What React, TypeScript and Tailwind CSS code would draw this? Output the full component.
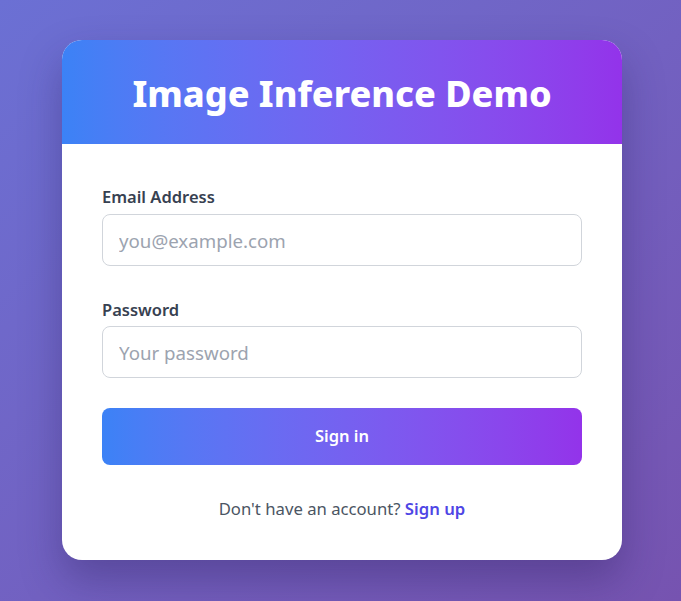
import React, { useState } from 'react';

export default function App() {
  const [email, setEmail] = useState('');
  const [password, setPassword] = useState('');

  return (
    <div
      className="min-h-screen w-full flex items-start justify-center pt-10 pl-[3px] bg-gradient-to-br from-[#6b70d4] to-[#7653b0]"
      style={{ fontFamily: '"Noto Sans", "Open Sans", sans-serif' }}
    >
      <div className="w-[560px] bg-white rounded-[20px] overflow-hidden shadow-[0_20px_40px_rgba(40,30,90,0.35)]">
        {/* Header */}
        <div className="h-[104px] flex items-center justify-center pt-[3px] bg-gradient-to-r from-[#3b82f6] to-[#9333ea]">
          <h1 className="text-white text-[36px] font-extrabold leading-none">Image Inference Demo</h1>
        </div>

        {/* Form */}
        <form className="px-10 pt-10 pb-[39px]" onSubmit={(e) => e.preventDefault()}>
          <label className="block text-[16.5px] font-semibold text-[#374151] leading-6 mt-px mb-[5px]">Email Address</label>
          <input
            type="email"
            value={email}
            onChange={(e) => setEmail(e.target.value)}
            placeholder="you@example.com"
            className="w-full h-[52px] px-4 text-[18.7px] border border-[#d1d5db] rounded-lg outline-none placeholder:text-[#9ca3af] text-[#374151]"
          />

          <label className="block text-[16.5px] font-semibold text-[#374151] leading-6 mt-[32px] mb-[4px]">Password</label>
          <input
            type="password"
            value={password}
            onChange={(e) => setPassword(e.target.value)}
            placeholder="Your password"
            className="w-full h-[52px] px-4 text-[18.7px] border border-[#d1d5db] rounded-lg outline-none placeholder:text-[#9ca3af] text-[#374151]"
          />

          <button
            type="submit"
            className="w-full h-[57px] mt-[30px] rounded-lg text-white text-[16.5px] font-semibold bg-gradient-to-r from-[#3b82f6] to-[#9333ea]"
          >
            Sign in
          </button>

          <p className="mt-[32px] text-center text-[16.7px] leading-6 text-[#4b5563]">
            Don't have an account?{' '}
            <a href="#" className="font-semibold text-[#4f46e5]">Sign up</a>
          </p>
        </form>
      </div>
    </div>
  );
}
